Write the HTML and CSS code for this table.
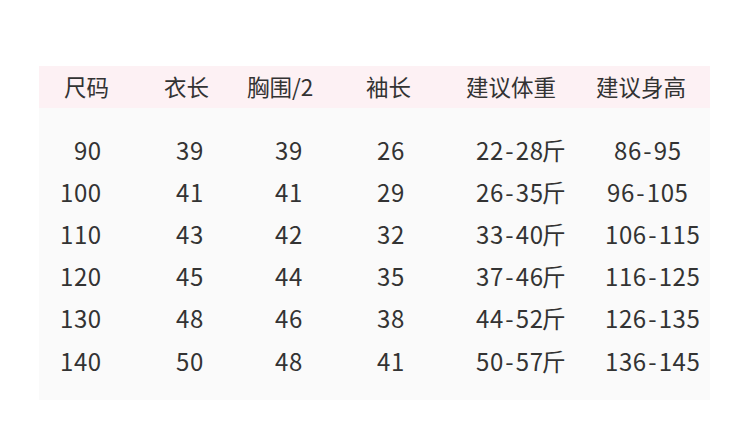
FILE: index.html
```html
<!DOCTYPE html>
<html lang="zh-CN">
<head>
<meta charset="utf-8">
<title>尺码表</title>
<link rel="stylesheet" href="styles.css">
</head>
<body>
<div class="page">
  <div class="chart">
    <div class="head row">
      <span>尺码</span><span>衣长</span><span>胸围/2</span><span>袖长</span><span>建议体重</span><span>建议身高</span>
    </div>
    <div class="body">
      <div class="row"><span>&#8199;90</span><span>39</span><span>39</span><span>26</span><span>22<i>-</i>28<b>斤</b></span><span class="c6a">86<i>-</i>95</span></div>
      <div class="row"><span>100</span><span>41</span><span>41</span><span>29</span><span>26<i>-</i>35<b>斤</b></span><span class="c6b">96<i>-</i>105</span></div>
      <div class="row"><span>110</span><span>43</span><span>42</span><span>32</span><span>33<i>-</i>40<b>斤</b></span><span>106<i>-</i>115</span></div>
      <div class="row"><span>120</span><span>45</span><span>44</span><span>35</span><span>37<i>-</i>46<b>斤</b></span><span>116<i>-</i>125</span></div>
      <div class="row"><span>130</span><span>48</span><span>46</span><span>38</span><span>44<i>-</i>52<b>斤</b></span><span>126<i>-</i>135</span></div>
      <div class="row"><span>140</span><span>50</span><span>48</span><span>41</span><span>50<i>-</i>57<b>斤</b></span><span>136<i>-</i>145</span></div>
    </div>
  </div>
</div>
</body>
</html>
```

FILE: styles.css
```css
html, body {
  margin: 0;
  padding: 0;
  background: #ffffff;
}
.page {
  width: 750px;
  height: 430px;
  padding: 66px 0 0 39px;
  box-sizing: border-box;
}
.chart {
  width: 671px;
  font-family: "Noto Sans CJK SC", "Noto Sans", sans-serif;
  color: #333333;
}
.row {
  display: grid;
  grid-template-columns: 104px 83px 119px 100px 130px 1fr;
  padding-left: 21px;
  align-items: center;
  white-space: pre;
}
.head {
  height: 42px;
  padding-bottom: 3px;
  box-sizing: border-box;
  background: #fdf1f4;
  font-size: 22.5px;
}
.head span:nth-child(1) { padding-left: 4px; }
.body {
  background: #fafafa;
  padding: 20px 0 19px;
  height: 292px;
  box-sizing: border-box;
  font-size: 24px;
  letter-spacing: 0.6px;
}
.body i {
  font-style: normal;
  padding: 0 1.5px;
}
.body b {
  font-weight: normal;
  letter-spacing: 0;
  margin-left: -2px;
}
.body .row {
  height: 42.2px;
}
.body .row span:nth-child(2) { padding-left: 12px; }
.body .row span:nth-child(3) { padding-left: 28px; }
.body .row span:nth-child(4) { padding-left: 11px; }
.body .row span:nth-child(5) { padding-left: 10px; }
.body .row span:nth-child(6) { padding-left: 9px; }
.body .row span.c6a { padding-left: 18px; }
.body .row span.c6b { padding-left: 11px; }
```
